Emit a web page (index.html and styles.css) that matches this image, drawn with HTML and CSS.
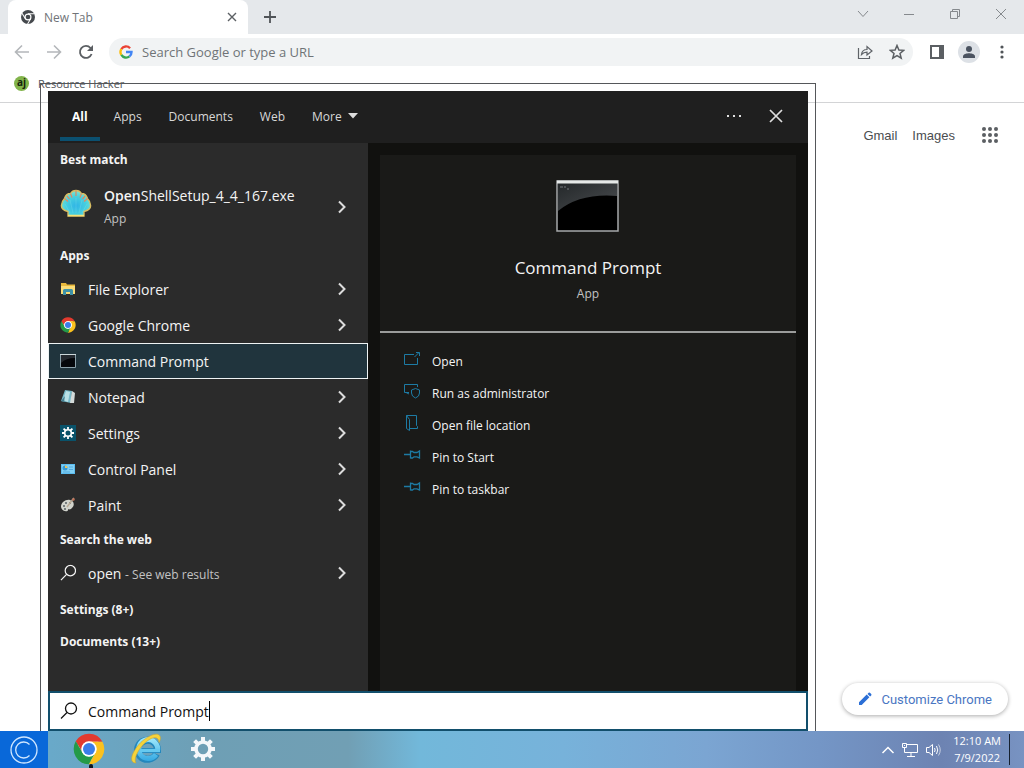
FILE: index.html
```html
<!DOCTYPE html>
<html lang="en">
<head>
<meta charset="utf-8">
<title>New Tab</title>
<link rel="stylesheet" href="styles.css">
</head>
<body>
<svg class="defs" width="0" height="0" aria-hidden="true">
  <defs>
    <linearGradient id="glare" x1="0" y1="0" x2="1" y2="1"><stop offset="0" stop-color="#24282a"/><stop offset="1" stop-color="#4a4d50"/></linearGradient>
    <radialGradient id="shellFill" cx=".5" cy=".6" r=".6"><stop offset="0" stop-color="#2fb4e6"/><stop offset=".6" stop-color="#48d0de"/><stop offset="1" stop-color="#7fe6d0"/></radialGradient>
    <linearGradient id="ieFill" gradientUnits="userSpaceOnUse" x1="0" y1="4" x2="0" y2="30"><stop offset="0" stop-color="#a5ecfd"/><stop offset="1" stop-color="#2ba3e0"/></linearGradient>
    <symbol id="chevron" viewBox="0 0 10 14"><path d="M2 1.500 7.500 7 2 12.500" fill="none" stroke="#dcdcdc" stroke-width="2"/></symbol>
    <symbol id="chrome" viewBox="0 0 48 48">
      <circle cx="24" cy="24" r="18" fill="#fff"/>
      <path d="M24 13h20.200A23 23 0 0 0 4.100 12.500L14.500 29.500A11 11 0 0 1 24 13z" fill="#e23a2e"/>
      <path d="M33.500 29.500 23.500 47A23 23 0 0 0 44.200 13H24a11 11 0 0 1 9.500 16.500z" fill="#fbc11e"/>
      <path d="M14.500 29.500 4.100 12.500A23 23 0 0 0 23.500 47l10-17.500a11 11 0 0 1-19 0z" fill="#249a48"/>
      <circle cx="24" cy="24" r="11.500" fill="#fff"/><circle cx="24" cy="24" r="9" fill="#3b7de8"/>
    </symbol>
    <symbol id="lens" viewBox="0 0 18 18"><circle cx="11" cy="6.500" r="5.500" fill="none" stroke="currentColor" stroke-width="1.300"/><path d="M7 10.500 1 16.500" stroke="currentColor" stroke-width="1.300"/></symbol>
    <symbol id="gear" viewBox="-12 -12 24 24">
      <circle r="7" fill="none" stroke="currentColor" stroke-width="3.600"/>
      <g stroke="currentColor" stroke-width="4"><path d="M0-8V-12M0 8V12M-8 0H-12M8 0H12M-5.600-5.600-8.400-8.400M5.600 5.600 8.400 8.400M-5.600 5.600-8.400 8.400M5.600-5.600 8.400-8.400"/></g>
    </symbol>
    <symbol id="pin" viewBox="0 0 18 16"><path d="M0 7.500H6.500M6.500 3.500V11.500M6.500 4.500H8.500L10 5.500H13L15.500 4V11L13 9.800H10L8.500 11H6.500" fill="none" stroke="currentColor" stroke-width="1.300"/></symbol>
  </defs>
</svg>
<div class="desktop">
  <main class="browser">
    <header class="tabstrip">
      <div class="tab">
        <svg width="14" height="14" viewBox="0 0 48 48"><circle cx="24" cy="24" r="24" fill="#45494d"/><path d="M24 13h22M14.500 29.500 3.500 11M33.500 29.500 22.500 48" stroke="#fff" stroke-width="3.500"/><circle cx="24" cy="24" r="12" fill="#fff"/><circle cx="24" cy="24" r="8" fill="#45494d"/></svg>
        <span class="tab-title">New Tab</span>
        <button class="icon-btn" aria-label="Close tab"><svg width="10" height="10" viewBox="0 0 10 10"><path d="M1 1 9 9M9 1 1 9" stroke="#5c6064" stroke-width="1.400"/></svg></button>
      </div>
      <button class="icon-btn new-tab" aria-label="New tab"><svg width="12" height="12" viewBox="0 0 12 12"><path d="M6 0V12M0 6H12" stroke="#505458" stroke-width="1.800"/></svg></button>
      <div class="window-controls">
        <button class="icon-btn" aria-label="Search tabs"><svg width="12" height="12" viewBox="0 0 12 12"><path d="M1 3 6 8.500 11 3" fill="none" stroke="#85898d"/></svg></button>
        <button class="icon-btn" aria-label="Minimize"><svg width="12" height="12" viewBox="0 0 12 12"><path d="M1 6.500H11" stroke="#85898d"/></svg></button>
        <button class="icon-btn" aria-label="Restore"><svg width="12" height="12" viewBox="0 0 12 12"><path d="M1.500 3.500H8.500V10.500H1.500ZM3.500 3.500V1.500H10.500V8.500H8.500" fill="none" stroke="#85898d"/></svg></button>
        <button class="icon-btn" aria-label="Close"><svg width="12" height="12" viewBox="0 0 12 12"><path d="M1 1 11 11M11 1 1 11" stroke="#85898d"/></svg></button>
      </div>
    </header>
    <div class="toolbar">
      <div class="nav">
        <button class="icon-btn" aria-label="Back"><svg width="16" height="16" viewBox="0 0 16 16"><path d="M15 8H2M8 1.500 1.500 8 8 14.500" fill="none" stroke="#b4b7ba" stroke-width="1.600"/></svg></button>
        <button class="icon-btn" aria-label="Forward"><svg width="16" height="16" viewBox="0 0 16 16"><path d="M1 8H14M8 1.500 14.500 8 8 14.500" fill="none" stroke="#b4b7ba" stroke-width="1.600"/></svg></button>
        <button class="icon-btn" aria-label="Reload"><svg width="16" height="16" viewBox="0 0 16 16"><path d="M13.600 10A6 6 0 1 1 12.500 4L14 5.800" fill="none" stroke="#5b5f63" stroke-width="1.800"/><path d="M15 1V7H9Z" fill="#5b5f63"/></svg></button>
      </div>
      <div class="omnibox">
        <svg width="14" height="14" viewBox="0 0 48 48" fill="none" stroke-width="8"><path d="M38 11A19 19 0 0 0 8 14" stroke="#ea4335"/><path d="M8 14a19 19 0 0 0 0 20" stroke="#fbbc05"/><path d="M8 34a19 19 0 0 0 28 5" stroke="#34a853"/><path d="M36 39a19 19 0 0 0 7-15H24" stroke="#4285f4"/></svg>
        <input class="address" type="text" placeholder="Search Google or type a URL" aria-label="Address">
        <button class="icon-btn" aria-label="Share"><svg width="16" height="16" viewBox="0 0 16 16" fill="none" stroke="#5f6368" stroke-width="1.200"><path d="M1.500 4V14.500H12.500V12"/><path d="M4.500 10.500C5 6.500 7.500 5.500 10 5.500V2.500L15 7 10 11V8.200C7.500 8.200 6 8.800 4.500 10.500Z"/></svg></button>
        <button class="icon-btn" aria-label="Bookmark"><svg width="16" height="16" viewBox="0 0 16 16"><path d="M8 1.500 9.900 6 14.700 6.300 11 9.400 12.200 14.200 8 11.600 3.800 14.200 5 9.400 1.300 6.300 6.100 6Z" fill="none" stroke="#5b5f63" stroke-width="1.500"/></svg></button>
      </div>
      <div class="tools">
        <button class="icon-btn" aria-label="Side panel"><svg width="14" height="14" viewBox="0 0 14 14"><path d="M1 1H13V13H1Z" fill="none" stroke="#5b5f63" stroke-width="2"/><path d="M9 1H13V13H9Z" fill="#5b5f63"/></svg></button>
        <button class="icon-btn" aria-label="Profile"><svg width="22" height="22" viewBox="0 0 22 22"><circle cx="11" cy="11" r="11" fill="#dde1e6"/><circle cx="11" cy="8" r="3" fill="#4b5360"/><path d="M5 17V15.500C5 13 9 12.300 11 12.300S17 13 17 15.500V17Z" fill="#4b5360"/></svg></button>
        <button class="icon-btn" aria-label="Menu"><svg width="4" height="14" viewBox="0 0 4 14" fill="#505458"><circle cx="2" cy="2" r="1.600"/><circle cx="2" cy="7" r="1.600"/><circle cx="2" cy="12" r="1.600"/></svg></button>
      </div>
    </div>
    <nav class="bookmarks"><a class="bookmark" href="#"><span class="favicon">aj</span>Resource Hacker</a></nav>
    <section class="page">
      <nav class="google-links">
        <a href="#">Gmail</a><a href="#">Images</a>
        <button class="icon-btn" aria-label="Google apps"><svg width="16" height="16" viewBox="0 0 16 16" fill="#5b5f63"><circle cx="2" cy="2" r="2"/><circle cx="8" cy="2" r="2"/><circle cx="14" cy="2" r="2"/><circle cx="2" cy="8" r="2"/><circle cx="8" cy="8" r="2"/><circle cx="14" cy="8" r="2"/><circle cx="2" cy="14" r="2"/><circle cx="8" cy="14" r="2"/><circle cx="14" cy="14" r="2"/></svg></button>
      </nav>
      <button class="customize"><svg width="14" height="14" viewBox="0 0 14 14" fill="#2b6fd6"><path d="M1 13V10.300L8.700 2.600 11.400 5.300 3.700 13ZM9.500 1.900 10.600.8Q11.200.2 11.900.8L13.200 2.100Q13.800 2.800 13.200 3.400L12.100 4.500Z"/></svg>Customize Chrome</button>
    </section>
  </main>

  <div class="search-frame">
    <section class="search-panel" aria-label="Search">
      <header class="search-head">
        <nav class="filters">
          <button class="filter active">All</button><button class="filter">Apps</button><button class="filter">Documents</button><button class="filter">Web</button><button class="filter">More <svg width="10" height="6" viewBox="0 0 10 6"><path d="M0 0H10L5 5.500Z" fill="#ddd"/></svg></button>
        </nav>
        <div class="head-actions">
          <button class="icon-btn" aria-label="Options"><svg width="16" height="4" viewBox="0 0 16 4" fill="#e0e0e0"><path d="M1 1h2v2H1zM7 1h2v2H7zM13 1h2v2H13z"/></svg></button>
          <button class="icon-btn" aria-label="Close search"><svg width="14" height="14" viewBox="0 0 14 14"><path d="M1 1 13 13M13 1 1 13" stroke="#dedede" stroke-width="1.700"/></svg></button>
        </div>
      </header>
      <div class="columns">
        <div class="results">
          <h2 class="group">Best match</h2>
          <button class="best">
            <svg width="32" height="32" viewBox="0 0 32 32"><path d="M8 28V23.500C4 22.500 1 20 1.500 17 2 14 3 12 4.500 10.500 5.500 7.500 8 5.500 10.500 5.500 12 3 14 2.500 16 2.500S20 3 21.500 5.500C24 5.500 26.500 7.500 27.500 10.500 29 12 30 14 30.500 17 31 20 28 22.500 24 23.500V28Z" fill="url(#shellFill)" stroke="#d8bd62" stroke-width="1.400"/><path d="M4.500 10.500 8 13.500M10.500 5.500 12 9.500M16 2.500V8M21.500 5.500 20 9.500M27.500 10.500 24 13.500M7 8 9.500 11M25 8 22.500 11" stroke="#e08862" stroke-width="1.200"/><path d="M10 25 5 16M13 25 10 12M16 25V10M19 25 22 12M22 25 27 16" stroke="#8fe9ee" stroke-opacity=".25"/><path d="M8 27.500H24" stroke="#f5df78" stroke-width="1.500"/></svg>
            <span class="best-text"><span class="name"><b>Open</b>ShellSetup_4_4_167.exe</span><span class="kind">App</span></span>
            <svg class="go" width="10" height="14"><use href="#chevron"/></svg>
          </button>
          <h2 class="group">Apps</h2>
          <button class="row"><svg width="16" height="16" viewBox="0 0 16 16"><path d="M1 2H6L7 3.500H15V13H1Z" fill="#e9b93c"/><path d="M1 5H15V13H1Z" fill="#fbdd78"/><path d="M3 14V9.500Q3 8 4.500 8H11.500Q13 8 13 9.500V14H10V11H6V14Z" fill="#3f92a8"/></svg><span class="name">File Explorer</span><svg class="go" width="10" height="14"><use href="#chevron"/></svg></button>
          <button class="row"><svg width="16" height="16"><use href="#chrome"/></svg><span class="name">Google Chrome</span><svg class="go" width="10" height="14"><use href="#chevron"/></svg></button>
          <button class="row selected"><svg width="16" height="16" viewBox="0 0 16 16"><path d="M.5 1.500H15.500V14.500H.5Z" fill="#05070b" stroke="#8aa0aa"/><path d="M1 2H15V5Q6 5 1 10Z" fill="#24292f"/><path d="M0 1.500H16" stroke="#ccd7da"/></svg><span class="name">Command Prompt</span></button>
          <button class="row"><svg width="16" height="16" viewBox="0 0 16 16"><path d="M5 1 12 2 11 14 1 12Z" fill="#76b9c9"/><path d="M6 2 10 3 8 13 3 11Z" fill="#b8e0e6"/><path d="M12 2 15 4 14 14 10 14Z" fill="#d4dbda"/><path d="M1 12 5 7 4 13Z" fill="#457e90"/></svg><span class="name">Notepad</span><svg class="go" width="10" height="14"><use href="#chevron"/></svg></button>
          <button class="row"><svg width="16" height="16" viewBox="-8 -8 16 16"><path d="M-8-8H8V8H-8Z" fill="#09526a"/><circle r="3.300" fill="none" stroke="#fff" stroke-width="1.600"/><path d="M0-3.500V-6M0 3.500V6M-3.500 0H-6M3.500 0H6M-2.500-2.500-4.400-4.400M2.500 2.500 4.400 4.400M-2.500 2.500-4.400 4.400M2.500-2.500 4.400-4.400" stroke="#fff" stroke-width="1.800"/></svg><span class="name">Settings</span><svg class="go" width="10" height="14"><use href="#chevron"/></svg></button>
          <button class="row"><svg width="16" height="16" viewBox="0 0 16 16"><path d="M1 3H15V13H1Z" fill="#5cbdf0"/><path d="M2 4H14V12H2Z" fill="#82d1f6"/><circle cx="5" cy="7" r="2.500" fill="#3798d4"/><path d="M5 7V4.500A2.500 2.500 0 0 1 7.500 7Z" fill="#e9c65e"/><path d="M9 6H13M9 8.500H13M3 11H10" stroke="#54abdd"/></svg><span class="name">Control Panel</span><svg class="go" width="10" height="14"><use href="#chevron"/></svg></button>
          <button class="row"><svg width="16" height="16" viewBox="0 0 16 16"><path d="M1 10C1 5 6 2 10 3S15 8 12 11 8 11 8 13 2 15 1 10Z" fill="#d2d4cd"/><g fill="#596265"><circle cx="4" cy="9" r="1"/><circle cx="6" cy="6" r="1"/><circle cx="10" cy="6" r="1"/><circle cx="5" cy="12" r="1"/></g><path d="M7 10 13 2 14 1" stroke="#b9aa96" stroke-width="1.400"/><path d="M12 3 13 1 15 2 14 4Z" fill="#c16f55"/></svg><span class="name">Paint</span><svg class="go" width="10" height="14"><use href="#chevron"/></svg></button>
          <h2 class="group">Search the web</h2>
          <button class="row"><svg width="16" height="18" viewBox="0 0 17 18"><use href="#lens" width="18" height="18"/></svg><span class="name">open <small>- See web results</small></span><svg class="go" width="10" height="14"><use href="#chevron"/></svg></button>
          <h2 class="group">Settings (8+)</h2>
          <h2 class="group">Documents (13+)</h2>
        </div>
        <div class="preview">
          <article class="card">
            <div class="hero">
              <svg width="64" height="52" viewBox="0 0 64 52"><path d="M1 1H62V51H1Z" fill="#000" stroke="#a7a9aa" stroke-width="1.500"/><path d="M2 3H61V16Q24 13 2 31Z" fill="url(#glare)"/><path d="M1 2H62" stroke="#e6e9e8" stroke-width="3"/><path d="M4 7H7M8 7H10M11 9H13" stroke="#777b7e"/></svg>
              <h1 class="hero-title">Command Prompt</h1>
              <p class="kind">App</p>
            </div>
            <div class="actions">
              <button class="action"><svg width="18" height="16" viewBox="0 0 18 16" fill="none" stroke="currentColor"><path d="M10 3.500H.5V13.500H13.500V7M10.500 6 15 1.500M12 1.500H15.500V5"/></svg>Open</button>
              <button class="action"><svg width="18" height="16" viewBox="0 0 18 16" fill="none" stroke="currentColor"><path d="M5 9.500H.5V1.500H13.500V4M2 9.500 5 11M11.500 5.500 15.500 7V10Q15.500 13.500 11.500 15 7.500 13.500 7.500 10V7Z"/></svg>Run as administrator</button>
              <button class="action"><svg width="18" height="16" viewBox="0 0 18 16" fill="none" stroke="currentColor"><path d="M2.500 .5H12.500V10.500L13.500 11.500V13.500H6M2.500 .5V13.500L5.500 15.500V4.500Z"/></svg>Open file location</button>
              <button class="action"><svg width="18" height="16"><use href="#pin"/></svg>Pin to Start</button>
              <button class="action"><svg width="18" height="16"><use href="#pin"/></svg>Pin to taskbar</button>
            </div>
          </article>
        </div>
      </div>
      <label class="search-box"><svg width="18" height="18"><use href="#lens"/></svg><input class="query" type="text" value="Command Prompt" aria-label="Search query"><span class="caret"></span></label>
    </section>
  </div>

  <footer class="taskbar">
    <button class="start" aria-label="Start"><svg width="28" height="28" viewBox="0 0 28 28" fill="none" stroke="#cfe6ff" stroke-width="1.300"><circle cx="14" cy="14" r="13"/><path d="M19.500 8.500A8 8 0 1 0 19.500 19.500"/></svg></button>
    <div class="pinned">
      <button class="task running" aria-label="Google Chrome"><svg width="32" height="32"><use href="#chrome"/></svg></button>
      <button class="task" aria-label="Internet Explorer"><svg width="32" height="32" viewBox="0 0 32 32" fill="none"><path d="M26.500 21A10 9.500 0 1 1 27.500 17.500" stroke="#2387bd" stroke-width="7"/><path d="M10 17.500H31" stroke="#2387bd" stroke-width="5"/><path d="M26 21.500A9.500 9.500 0 1 1 27.500 18" stroke="url(#ieFill)" stroke-width="5"/><path d="M10 17.500H30" stroke="#65c9f0" stroke-width="3.200"/><path d="M6 30C-1 30 1 21 8 12.500S27-2 30 3C31 5 30 8 29 9.500 29 4 24 2.500 16.500 8.500S3 26 6 30Z" fill="#f6d33b" stroke="#c9a632" stroke-width=".6"/></svg></button>
      <button class="task" aria-label="Settings"><svg width="24" height="24"><use href="#gear"/></svg></button>
    </div>
    <div class="tray">
      <button class="icon-btn" aria-label="Show hidden icons"><svg width="14" height="14" viewBox="0 0 14 14"><path d="M1.500 10 7 4.500 12.500 10" fill="none" stroke="#fff" stroke-width="1.500"/></svg></button>
      <button class="icon-btn" aria-label="Network"><svg width="18" height="16" viewBox="0 0 18 16" fill="none" stroke="#fff"><path d="M6 2.500H16.500V10.500H3.500V6M10 10.500V14M6 14.500H14M1.500 1.500H5.500V5.500H1.500ZM3 3.500H4M3.500 6V10"/></svg></button>
      <button class="icon-btn" aria-label="Volume"><svg width="16" height="16" viewBox="0 0 16 16" fill="none" stroke="#fff"><path d="M1.500 5.500H4L7.500 2.500V13.500L4 10.500H1.500ZM9.500 6Q10.800 8 9.500 10M11.500 4Q14 8 11.500 12"/><path d="M13.500 2.500Q17 8 13.500 13.500" stroke-opacity=".6"/></svg></button>
      <time class="clock" datetime="2022-07-09T00:10"><span>12:10 AM</span><span>7/9/2022</span></time>
      <button class="show-desktop" aria-label="Show desktop"></button>
    </div>
  </footer>
</div>
</body>
</html>
```
FILE: styles.css
```css
* { box-sizing: border-box; }
body { margin: 0; font-family: "Open Sans", "Noto Sans", sans-serif; font-size: 12px; color: #202124; }
h1, h2, p { margin: 0; }
button, input { font: inherit; color: inherit; border: 0; background: none; padding: 0; }
input { outline: 0; }
a { color: inherit; text-decoration: none; }
svg { display: block; flex: none; }
.defs { position: absolute; }
.desktop { position: relative; display: flex; flex-direction: column; min-height: 100vh; overflow: hidden; }
.icon-btn { display: grid; place-items: center; flex: none; }

/* Browser window */
.browser { flex: 1; display: flex; flex-direction: column; background: #fff; }
.tabstrip { display: flex; align-items: center; height: 34px; padding-left: 8px; background: #e5e8eb; }
.tab { display: flex; align-items: center; gap: 9px; width: 240px; height: 34px; padding: 0 11px 0 13px; background: #fff; border-radius: 8px 8px 0 0; color: #707478; }
.tab-title { flex: 1; }
.new-tab { margin-left: 16px; }
.window-controls { display: flex; gap: 34px; margin-left: auto; padding: 0 17px 6px 0; }
.toolbar { display: flex; align-items: center; height: 36px; }
.nav { display: flex; gap: 16px; padding: 0 15px 0 14px; }
.omnibox { flex: 1; display: flex; align-items: center; gap: 16px; height: 28px; padding: 0 8px 0 10px; border-radius: 14px; background: #f1f3f4; }
.address { flex: 1; min-width: 0; margin-left: -7px; font-size: 13px; }
.address::placeholder { color: #6f7377; opacity: 1; }
.tools { display: flex; align-items: center; gap: 14px; padding: 0 20px 0 17px; }
.tools .icon-btn:last-child { margin-left: 6px; }
.bookmarks { display: flex; align-items: center; height: 33px; padding: 0 14px 6px; border-bottom: 1px solid #d3d4d6; }
.bookmark { display: flex; align-items: center; gap: 9px; font-size: 11px; color: #505357; }
.favicon { width: 15px; height: 15px; border-radius: 50%; background: #82b44b; color: #14220d; font-size: 10px; font-weight: 700; line-height: 13px; text-align: center; }
.page { flex: 1; display: flex; flex-direction: column; justify-content: space-between; align-items: flex-end; padding: 24px 16px 16px; }
.google-links { display: flex; align-items: center; gap: 15px; padding-right: 10px; font-family: "Liberation Sans", Arial, sans-serif; font-size: 13px; color: #4a4d50; }
.google-links .icon-btn { margin-left: 12px; }
.customize { display: flex; align-items: center; gap: 9px; height: 32px; padding: 0 16px; border-radius: 16px; background: #fff; box-shadow: 0 1px 4px #0005; color: #4a76c2; font-family: Roboto, sans-serif; font-size: 13px; }

/* Search flyout floats above the browser window */
.search-frame { position: absolute; top: 83px; bottom: 37px; left: 40px; width: 776px; max-width: calc(100% - 40px); padding: 7px 7px 0; border: 1px solid #55575a; border-bottom: 0; }
.search-panel { display: flex; flex-direction: column; height: 100%; background: #11110f; color: #f4f4f4; }
.search-head { display: flex; justify-content: space-between; height: 52px; padding: 0 25px 2px 12px; background: #1f1f1f; }
.filters { display: flex; }
.filter { display: flex; align-items: center; gap: 6px; margin-right: 1px; padding: 0 13px; border-bottom: 4px solid transparent; border-top: 4px solid transparent; color: #d8d8d8; }
.filter.active { padding: 0 12px; border-bottom-color: #0b5070; color: #fff; font-weight: 700; }
.head-actions { display: flex; gap: 27px; }
.columns { flex: 1; display: flex; }
.results { width: 320px; background: #2b2b2b; }
.group { height: 32px; padding: 2px 0 0 12px; line-height: 30px; font-size: 12px; font-weight: 700; }
.row + .group ~ .group:nth-last-child(-n+2) { padding-top: 4px; }
.best, .row { display: flex; align-items: center; width: 100%; padding: 0 21px 0 12px; text-align: left; }
.best { gap: 12px; height: 64px; }
.best > svg:first-child { margin-bottom: 6px; }
.best-text { flex: 1; display: flex; flex-direction: column; gap: 4px; padding-bottom: 2px; }
.name { flex: 1; font-size: 14px; line-height: 20px; }
.name b { font-weight: 600; }
.kind, .name small { font-size: 12px; color: #c3c3c3; }
.row { gap: 12px; height: 36px; }
.row .name { padding-top: 2px; }
.row.selected { padding-left: 11px; border: 1px solid #eef3f4; background: #20343d; }
.preview { flex: 1; display: flex; padding: 12px 12px 0; }
.card { flex: 1; background: #1a1a18; }
.hero { display: flex; flex-direction: column; align-items: center; height: 178px; padding-top: 25px; border-bottom: 2px solid #9b9c9b; }
.hero-title { margin: 24px 0 5px; font-size: 17px; line-height: 24px; font-weight: 400; }
.actions { padding: 12px 24px; }
.action { display: flex; align-items: center; gap: 10px; width: 100%; height: 32px; text-align: left; }
.action svg { color: #1d7ba4; margin-bottom: 4px; }
.search-box { display: flex; align-items: center; height: 40px; padding-left: 10px; border: 2px solid #124f6c; background: #fff; color: #111; }
.query { field-sizing: content; margin-left: 10px; font-size: 14px; }
.caret { width: 1px; height: 20px; background: #000; }

/* Taskbar */
.taskbar { display: flex; height: 37px; background: linear-gradient(90deg, #69a9c9 5%, #6e9fb5 20%, #719fb4 34%, #72b8da 41%, #77b2da 55%, #7ba5d2 69%, #7496c6 80%, #6d83b2 92%, #7893c2); }
.start { display: grid; place-items: center; width: 48px; background: #0968d9; }
.pinned { display: flex; padding: 0 0 2px 12px; color: #f4f7fa; }
.task { display: grid; place-items: center; width: 57px; }
.running { position: relative; }
.running::after { content: ""; position: absolute; bottom: -2px; left: 50%; width: 4px; height: 4px; border-radius: 2px 2px 0 0; background: #101820; }
.tray { display: flex; align-items: center; gap: 6px; margin-left: auto; color: #fff; }
.clock { display: flex; flex-direction: column; align-items: center; padding: 0 2px 2px 6px; font-size: 11px; line-height: 17px; }
.show-desktop { width: 15px; height: 31px; border-left: 1px solid #15202f; }
```
